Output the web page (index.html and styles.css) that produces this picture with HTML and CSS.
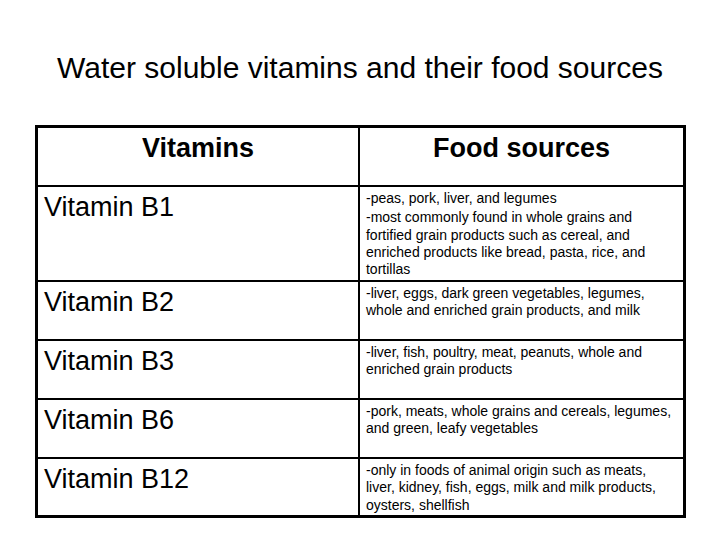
FILE: index.html
```html
<!DOCTYPE html>
<html>
<head>
<meta charset="utf-8">
<link rel="stylesheet" href="styles.css">
</head>
<body>
<div class="slide">
  <h1 class="title">Water soluble vitamins and their food sources</h1>
  <table class="vtable">
    <tr class="row-head">
      <th class="c1">Vitamins</th>
      <th class="c2">Food sources</th>
    </tr>
    <tr class="row-b1">
      <td class="c1 name">Vitamin B1</td>
      <td class="c2 src"><p>-peas, pork, liver, and legumes</p><p>-most commonly found in whole grains and fortified grain products such as cereal, and enriched products like bread, pasta, rice, and tortillas</p></td>
    </tr>
    <tr class="row">
      <td class="c1 name">Vitamin B2</td>
      <td class="c2 src"><p>-liver, eggs, dark green vegetables, legumes, whole and enriched grain products, and milk</p></td>
    </tr>
    <tr class="row">
      <td class="c1 name">Vitamin B3</td>
      <td class="c2 src"><p>-liver, fish, poultry, meat, peanuts, whole and enriched grain products</p></td>
    </tr>
    <tr class="row">
      <td class="c1 name">Vitamin B6</td>
      <td class="c2 src"><p>-pork, meats, whole grains and cereals, legumes, and green, leafy vegetables</p></td>
    </tr>
    <tr class="row-last">
      <td class="c1 name">Vitamin B12</td>
      <td class="c2 src"><p>-only in foods of animal origin such as meats, liver, kidney, fish, eggs, milk and milk products, oysters, shellfish</p></td>
    </tr>
  </table>
</div>
</body>
</html>
```
FILE: styles.css
```css
html, body {
  margin: 0;
  padding: 0;
  background: #fff;
}
.slide {
  width: 720px;
  height: 540px;
  font-family: "Liberation Sans", Arial, sans-serif;
  color: #000;
}
.title {
  margin: 0;
  padding-top: 53px;
  height: 30px;
  font-size: 30px;
  line-height: 30px;
  font-weight: normal;
  text-align: center;
  margin-bottom: 42px;
}
.vtable {
  margin-left: 35px;
  width: 651px;
  border: 3px solid #000;
  border-collapse: separate;
  border-spacing: 0;
  table-layout: fixed;
}
.vtable th, .vtable td {
  vertical-align: top;
  padding: 0;
  box-sizing: border-box;
}
.c1 {
  width: 321px;
  border-right: 2px solid #000;
}
.c2 {
  width: 322px;
}
.vtable th {
  font-size: 27px;
  line-height: 27px;
  font-weight: bold;
  text-align: center;
  height: 59px;
  padding-top: 7px;
  border-bottom: 2px solid #000;
}
.row-b1 td { height: 95px; border-bottom: 2px solid #000; }
.row td { height: 59px; border-bottom: 2px solid #000; }
.row-last td { height: 56px; }
.vtable td.name {
  font-size: 27px;
  line-height: 27px;
  padding: 7px 0 0 6px;
  text-align: left;
}
.vtable td.src {
  font-size: 14px;
  line-height: 17.3px;
  padding: 3px 6px 0 6px;
}
.src p {
  margin: 0;
}
.src p + p {
  margin-top: 2px;
}
```
